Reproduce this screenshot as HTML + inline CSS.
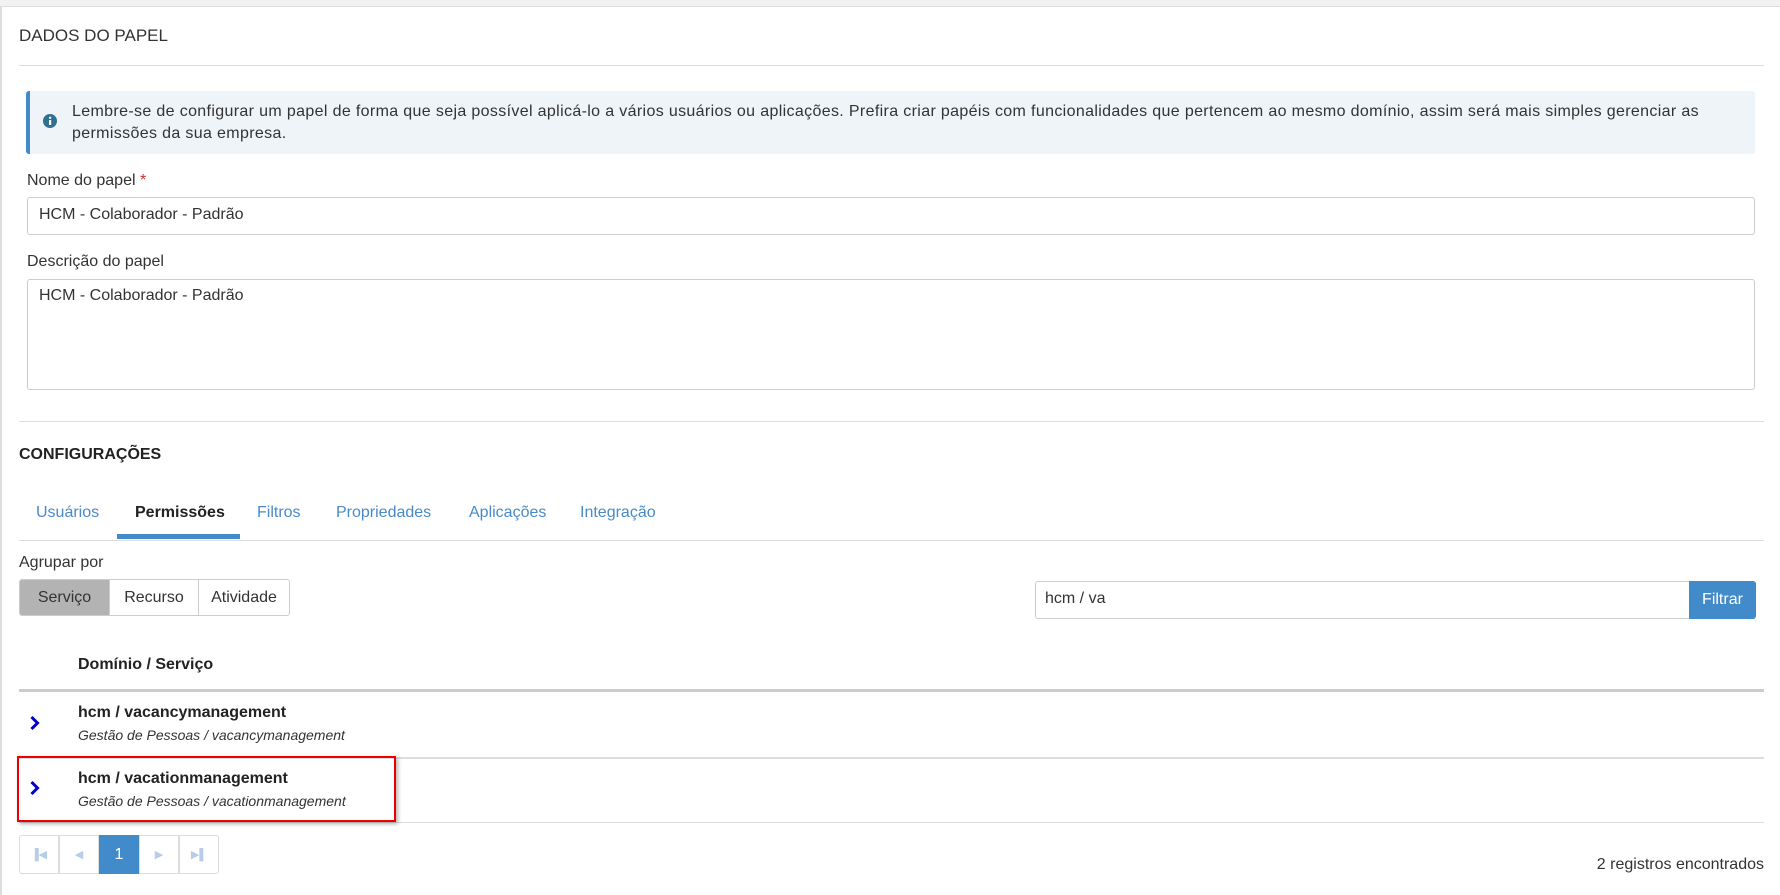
<!DOCTYPE html>
<html><head><meta charset="utf-8"><style>
*{box-sizing:border-box;margin:0;padding:0}
body{width:1780px;height:895px;background:#fff;font-family:"Liberation Sans",sans-serif;color:#333;position:relative;overflow:hidden}
.a{position:absolute;white-space:nowrap}
.l{position:absolute;background:#ddd;height:1px}
.tab{position:absolute;top:504px;font-size:16px;color:#4a8ac9}
.pg{position:absolute;top:835px;width:40px;height:39px;border:1px solid #ddd;color:#b5cde6;font-size:11px;display:flex;align-items:center;justify-content:center}
</style></head><body>
<div class="a" style="left:0;top:0;width:1780px;height:7px;background:#f2f2f2;border-bottom:1px solid #ddd"></div>
<div class="a" style="left:0;top:7px;width:2px;height:888px;background:#ddd"></div>
<div class="a" style="left:19px;top:26px;font-size:17px;color:#333">DADOS DO PAPEL</div>
<div class="l" style="left:19px;top:65px;width:1745px"></div>
<div class="a" style="left:26px;top:91px;width:1729px;height:63px;background:#eef4f7;border-left:4px solid #428bca;border-radius:3px"></div>
<svg class="a" style="left:43px;top:114px" width="14" height="14" viewBox="0 0 14 14"><circle cx="7" cy="7" r="7" fill="#31708f"/><rect x="6" y="6" width="2.2" height="5" fill="#fff"/><circle cx="7.1" cy="3.8" r="1.2" fill="#fff"/></svg>
<div class="a" style="left:72px;top:101px;font-size:16px;line-height:22px;letter-spacing:0.35px;color:#333">Lembre-se de configurar um papel de forma que seja possível aplicá-lo a vários usuários ou aplicações. Prefira criar papéis com funcionalidades que pertencem ao mesmo domínio, assim será mais simples gerenciar as<br>permissões da sua empresa.</div>
<div class="a" style="left:27px;top:172px;font-size:16px">Nome do papel <span style="color:#c9302c">*</span></div>
<div class="a" style="left:27px;top:197px;width:1728px;height:38px;border:1px solid #ccc;border-radius:3px;font-size:16px;padding:8px 11px">HCM - Colaborador - Padrão</div>
<div class="a" style="left:27px;top:253px;font-size:16px">Descrição do papel</div>
<div class="a" style="left:27px;top:279px;width:1728px;height:111px;border:1px solid #ccc;border-radius:3px;font-size:16px;padding:7px 11px">HCM - Colaborador - Padrão</div>
<div class="l" style="left:19px;top:421px;width:1745px"></div>
<div class="a" style="left:19px;top:446px;font-size:16px;font-weight:bold;color:#222">CONFIGURAÇÕES</div>
<div class="tab" style="left:36px">Usuários</div>
<div class="tab" style="left:135px;color:#222;font-weight:bold">Permissões</div>
<div class="tab" style="left:257px">Filtros</div>
<div class="tab" style="left:336px">Propriedades</div>
<div class="tab" style="left:469px">Aplicações</div>
<div class="tab" style="left:580px">Integração</div>
<div class="a" style="left:117px;top:534px;width:123px;height:5px;background:#428bca"></div>
<div class="l" style="left:19px;top:540px;width:1745px"></div>
<div class="a" style="left:19px;top:554px;font-size:16px">Agrupar por</div>
<div class="a" style="left:19px;top:579px;width:271px;height:37px;border:1px solid #ccc;border-radius:3px;display:flex;font-size:16px;overflow:hidden">
<div style="width:90px;background:#b3b3b3;display:flex;align-items:center;justify-content:center;border-right:1px solid #ccc">Serviço</div>
<div style="width:89px;display:flex;align-items:center;justify-content:center;border-right:1px solid #ccc">Recurso</div>
<div style="flex:1;display:flex;align-items:center;justify-content:center">Atividade</div></div>
<div class="a" style="left:1035px;top:581px;width:655px;height:38px;border:1px solid #ccc;border-radius:3px 0 0 3px;font-size:16px;padding:8px 9px">hcm / va</div>
<div class="a" style="left:1689px;top:581px;width:67px;height:38px;background:#428bca;color:#fff;border-radius:0 3px 3px 0;font-size:16px;display:flex;align-items:center;justify-content:center">Filtrar</div>
<div class="a" style="left:78px;top:656px;font-size:16px;font-weight:bold;color:#222">Domínio / Serviço</div>
<div class="a" style="left:19px;top:689px;width:1745px;height:3px;background:#ccc"></div>
<svg class="a" style="left:29px;top:715px" width="12" height="16" viewBox="0 0 12 16"><path d="M2.5 2 L8.5 8 L2.5 14" stroke="#0000cc" stroke-width="3" fill="none"/></svg>
<div class="a" style="left:78px;top:704px;font-size:16px;font-weight:bold;color:#222">hcm / vacancymanagement</div>
<div class="a" style="left:78px;top:727px;font-size:14px;font-style:italic">Gestão de Pessoas / vacancymanagement</div>
<div class="a" style="left:19px;top:757px;width:1745px;height:2px;background:#ddd"></div>
<svg class="a" style="left:29px;top:780px" width="12" height="16" viewBox="0 0 12 16"><path d="M2.5 2 L8.5 8 L2.5 14" stroke="#0000cc" stroke-width="3" fill="none"/></svg>
<div class="a" style="left:78px;top:770px;font-size:16px;font-weight:bold;color:#222">hcm / vacationmanagement</div>
<div class="a" style="left:78px;top:793px;font-size:14px;font-style:italic">Gestão de Pessoas / vacationmanagement</div>
<div class="l" style="left:19px;top:822px;width:1745px"></div>
<div class="a" style="left:17px;top:756px;width:379px;height:66px;border:2px solid #e00;box-shadow:2px 2px 4px rgba(0,0,0,.3)"></div>
<div class="pg" style="left:19px;border-radius:3px 0 0 3px">▐◀</div>
<div class="pg" style="left:59px">◀</div>
<div class="pg" style="left:99px;background:#428bca;border-color:#428bca;color:#fff;font-size:16px">1</div>
<div class="pg" style="left:139px">▶</div>
<div class="pg" style="left:179px;border-radius:0 3px 3px 0">▶▌</div>
<div class="a" style="right:16px;top:856px;font-size:16px">2 registros encontrados</div>
</body></html>
